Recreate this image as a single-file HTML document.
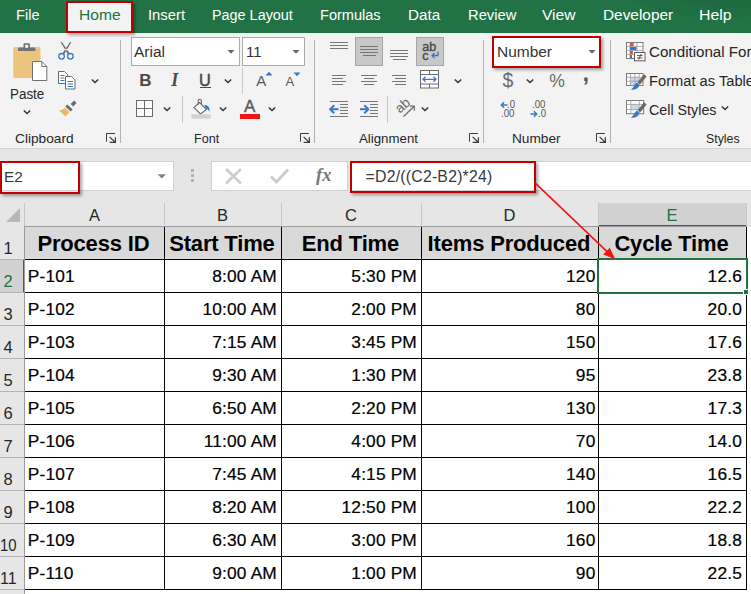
<!DOCTYPE html>
<html><head><meta charset="utf-8"><title>Excel</title>
<style>
*{box-sizing:border-box;margin:0;padding:0}
html,body{width:751px;height:594px;overflow:hidden;background:#e6e6e6;font-family:"Liberation Sans",sans-serif;}
#app{position:relative;width:751px;height:594px;overflow:hidden}
.t{position:absolute;white-space:pre;display:block}
.b{position:absolute;display:block}
#tabs{position:absolute;left:0;top:0;width:751px;height:33px;background:#217346}
#ribbon{position:absolute;left:0;top:33px;width:751px;height:115px;background:#f3f3f3}

</style></head><body><div id="app">
<div id="tabs">
<svg class="b" style="left:560px;top:0px" width="191" height="33" viewBox="0 0 191 33"><path d="M70 0 C95 10 130 22 191 16 V0 Z" fill="#1f6e43"/><path d="M120 0 C140 6 165 10 191 7 V0 Z" fill="#1e6a40"/></svg>
<div class="b" style="left:67px;top:2px;width:66px;height:31px;background:#f3f3f3;"></div>
<span class="t" style="left:16.00px;top:6px;font-size:15.4px;line-height:17px;color:#ffffff;transform:scaleX(0.9510);transform-origin:0 0;">File</span>
<span class="t" style="left:79.00px;top:6px;font-size:15.4px;line-height:17px;color:#217346;transform:scaleX(1.0127);transform-origin:0 0;">Home</span>
<span class="t" style="left:147.65px;top:6px;font-size:15.4px;line-height:17px;color:#ffffff;transform:scaleX(0.9633);transform-origin:0 0;">Insert</span>
<span class="t" style="left:211.75px;top:6px;font-size:15.4px;line-height:17px;color:#ffffff;transform:scaleX(0.9354);transform-origin:0 0;">Page Layout</span>
<span class="t" style="left:320.00px;top:6px;font-size:15.4px;line-height:17px;color:#ffffff;transform:scaleX(0.9442);transform-origin:0 0;">Formulas</span>
<span class="t" style="left:408.00px;top:6px;font-size:15.4px;line-height:17px;color:#ffffff;transform:scaleX(0.9899);transform-origin:0 0;">Data</span>
<span class="t" style="left:467.75px;top:6px;font-size:15.4px;line-height:17px;color:#ffffff;transform:scaleX(0.9566);transform-origin:0 0;">Review</span>
<span class="t" style="left:542.45px;top:6px;font-size:15.4px;line-height:17px;color:#ffffff;transform:scaleX(1.0120);transform-origin:0 0;">View</span>
<span class="t" style="left:602.80px;top:6px;font-size:15.4px;line-height:17px;color:#ffffff;transform:scaleX(1.0001);transform-origin:0 0;">Developer</span>
<span class="t" style="left:699.45px;top:6px;font-size:15.4px;line-height:17px;color:#ffffff;transform:scaleX(1.0324);transform-origin:0 0;">Help</span>
</div>
<div id="ribbon"></div>
<div class="b" style="left:0px;top:148px;width:751px;height:1px;background:#d4d4d4;"></div>
<svg class="b" style="left:10px;top:40px" width="40" height="44" viewBox="0 0 40 44"><rect x="3.2" y="7" width="27.2" height="31" rx="1.6" fill="#ebc57d"/><path d="M8 11 v-2.2 q0 -1.3 1.3 -1.3 h4.2 v-3 q0 -1.2 1.2 -1.2 h4 q1.2 0 1.2 1.2 v3 h4.2 q1.3 0 1.3 1.3 v2.2 z" fill="#727272"/><rect x="15.2" y="4.8" width="3" height="3" fill="#f3f3f3"/><path d="M22.5 21.5 h9.3 l5 5 v14 h-14.3 z" fill="#fff" stroke="#6e6e6e" stroke-width="1"/><path d="M31.8 21.5 v5 h5" fill="none" stroke="#6e6e6e" stroke-width="1"/></svg>
<span class="t" style="left:9.60px;top:85px;font-size:15.3px;line-height:17px;color:#262626;transform:scaleX(0.8767);transform-origin:0 0;">Paste</span>
<svg class="b" style="left:20.5px;top:107px" width="12" height="10" viewBox="0 0 12 10"><path d="M2.8 3.4 L6 6.6 L9.2 3.4" fill="none" stroke="#333" stroke-width="1.4"/></svg>
<svg class="b" style="left:56px;top:40px" width="20" height="23" viewBox="0 0 20 23"><path d="M4.6 2 L5.9 2 L13.6 13.6 L12 14.6 Z M15.4 2 L14.1 2 L6.4 13.6 L8 14.6 Z" fill="#6a6a6a"/><circle cx="5.6" cy="16.3" r="2.8" fill="none" stroke="#3b78c4" stroke-width="1.3"/><circle cx="14.4" cy="16.3" r="2.8" fill="none" stroke="#3b78c4" stroke-width="1.3"/></svg>
<svg class="b" style="left:56px;top:69px" width="22" height="22" viewBox="0 0 22 22"><path d="M2.5 2.5 h6 l3 3 v9 h-9 z" fill="#fff" stroke="#6a6a6a" stroke-width="1"/><path d="M9.5 7.5 h6 l3.5 3.5 v9 h-9.5 z" fill="#fff" stroke="#6a6a6a" stroke-width="1"/><path d="M4.5 6.5 h4 M4.5 9 h4 M4.5 11.5 h4 M11.5 12.5 h5.5 M11.5 15 h5.5 M11.5 17.5 h5.5" stroke="#3b78c4" stroke-width="1"/></svg>
<svg class="b" style="left:89px;top:75.6px" width="12" height="10" viewBox="0 0 12 10"><path d="M2.8 3.4 L6 6.6 L9.2 3.4" fill="none" stroke="#333" stroke-width="1.4"/></svg>
<svg class="b" style="left:56px;top:99px" width="22" height="20" viewBox="0 0 22 20"><path d="M14.6 5 L18.2 1.6 L20.6 4 L17.2 7.6 Z" fill="#6a6a6a"/><path d="M11.4 5.4 L16.6 10.6 L14.6 12.6 L9.4 7.4 Z" fill="#6a6a6a"/><path d="M9 8.5 L13.5 13 L9.5 17.5 L3 11.5 C6 11.5 8 10 9 8.5 Z" fill="#e9b765"/></svg>
<span class="t" style="left:14.60px;top:131px;font-size:13.5px;line-height:15px;color:#262626;transform:scaleX(1.0141);transform-origin:0 0;">Clipboard</span>
<svg class="b" style="left:106px;top:133px" width="11" height="11" viewBox="0 0 11 11"><path d="M0.5 8.7 V0.5 H9" fill="none" stroke="#3c3c3c" stroke-width="1"/><path d="M3.6 3.9 L9.2 9.2 M9.4 4.2 V9.4 H3.6" fill="none" stroke="#3c3c3c" stroke-width="1.2"/></svg>
<div class="b" style="left:120px;top:40px;width:1px;height:103px;background:#b3b3b3;"></div>
<div class="b" style="left:131px;top:37px;width:109px;height:29px;background:#fff;border:1px solid #ababab;"></div>
<span class="t" style="left:134.00px;top:43px;font-size:15.3px;line-height:17px;color:#333;transform:scaleX(1.0128);transform-origin:0 0;">Arial</span>
<svg class="b" style="left:226px;top:48.5px" width="10" height="6" viewBox="0 0 10 6"><path d="M1.5 1 L8.5 1 L5 4.8 Z" fill="#666"/></svg>
<div class="b" style="left:242px;top:37px;width:63px;height:29px;background:#fff;border:1px solid #ababab;"></div>
<span class="t" style="left:245.50px;top:43px;font-size:15.3px;line-height:17px;color:#333;transform:scaleX(0.9759);transform-origin:0 0;">11</span>
<svg class="b" style="left:291px;top:48.5px" width="10" height="6" viewBox="0 0 10 6"><path d="M1.5 1 L8.5 1 L5 4.8 Z" fill="#666"/></svg>
<span class="t" style="left:139.30px;top:71px;font-size:17px;line-height:19px;color:#4a4a4a;font-weight:bold;">B</span>
<span class="t" style="left:171.20px;top:70px;font-size:18px;line-height:20px;color:#4a4a4a;font-weight:bold;font-style:italic;font-family:'Liberation Serif',serif;">I</span>
<span class="t" style="left:199.00px;top:71px;font-size:16.3px;line-height:18px;color:#4a4a4a;-webkit-text-stroke:0.5px #4a4a4a;">U</span>
<div class="b" style="left:199.5px;top:87px;width:11.0px;height:1.2999999999999972px;background:#4a4a4a;"></div>
<svg class="b" style="left:221.6px;top:75.6px" width="12" height="10" viewBox="0 0 12 10"><path d="M2.8 3.4 L6 6.6 L9.2 3.4" fill="none" stroke="#333" stroke-width="1.4"/></svg>
<div class="b" style="left:242px;top:68px;width:1px;height:26px;background:#c8c8c8;"></div>
<span class="t" style="left:256.20px;top:72px;font-size:15px;line-height:17px;color:#5a5a5a;">A</span>
<svg class="b" style="left:265px;top:71px" width="8" height="5" viewBox="0 0 8 5"><path d="M0.5 4.5 L4 0.8 L7.5 4.5 Z" fill="#3b78c4"/></svg>
<span class="t" style="left:285.50px;top:74px;font-size:13px;line-height:15px;color:#5a5a5a;">A</span>
<svg class="b" style="left:293px;top:72px" width="8" height="5" viewBox="0 0 8 5"><path d="M0.5 0.5 L7.5 0.5 L4 4.2 Z" fill="#3b78c4"/></svg>
<svg class="b" style="left:135px;top:99px" width="20" height="20" viewBox="0 0 20 20"><rect x="1.5" y="1.5" width="16" height="16" fill="#fff" stroke="#6a6a6a" stroke-width="1"/><path d="M9.5 1.5 V17.5 M1.5 9.5 H17.5" stroke="#6a6a6a" stroke-width="1"/></svg>
<svg class="b" style="left:161.3px;top:104.2px" width="12" height="10" viewBox="0 0 12 10"><path d="M2.8 3.4 L6 6.6 L9.2 3.4" fill="none" stroke="#333" stroke-width="1.4"/></svg>
<div class="b" style="left:182px;top:96px;width:1px;height:27px;background:#c8c8c8;"></div>
<svg class="b" style="left:190px;top:97px" width="24" height="24" viewBox="0 0 24 24"><path d="M9.5 5.5 L16.5 12.5 L10.5 17 L4 10.5 Z" fill="#fff" stroke="#6a6a6a" stroke-width="1.1"/><path d="M8.2 8 V3.8 a1.6 1.6 0 0 1 3.2 0 V7" fill="none" stroke="#6a6a6a" stroke-width="1.1"/><path d="M14.5 8 C18 8 20 10 19.5 15 C18.5 12.5 17 11.5 15.5 11.5 Z" fill="#3b78c4"/><rect x="1.4" y="17.3" width="19.4" height="4.4" fill="#d2d2d2"/></svg>
<svg class="b" style="left:217.3px;top:104.2px" width="12" height="10" viewBox="0 0 12 10"><path d="M2.8 3.4 L6 6.6 L9.2 3.4" fill="none" stroke="#333" stroke-width="1.4"/></svg>
<span class="t" style="left:243.90px;top:97px;font-size:17px;line-height:19px;color:#5a5a5a;-webkit-text-stroke:0.4px #5a5a5a;">A</span>
<div class="b" style="left:240px;top:114px;width:20px;height:5px;background:#f01414;"></div>
<svg class="b" style="left:265.9px;top:104.2px" width="12" height="10" viewBox="0 0 12 10"><path d="M2.8 3.4 L6 6.6 L9.2 3.4" fill="none" stroke="#333" stroke-width="1.4"/></svg>
<span class="t" style="left:193.80px;top:131px;font-size:13.5px;line-height:15px;color:#262626;transform:scaleX(0.9329);transform-origin:0 0;">Font</span>
<svg class="b" style="left:300px;top:133px" width="11" height="11" viewBox="0 0 11 11"><path d="M0.5 8.7 V0.5 H9" fill="none" stroke="#3c3c3c" stroke-width="1"/><path d="M3.6 3.9 L9.2 9.2 M9.4 4.2 V9.4 H3.6" fill="none" stroke="#3c3c3c" stroke-width="1.2"/></svg>
<div class="b" style="left:314px;top:40px;width:1px;height:103px;background:#b3b3b3;"></div>
<div class="b" style="left:330px;top:42px;width:18px;height:1px;background:#777;"></div>
<div class="b" style="left:330px;top:45px;width:18px;height:1px;background:#777;"></div>
<div class="b" style="left:330px;top:48px;width:18px;height:1px;background:#777;"></div>
<div class="b" style="left:355px;top:37px;width:28px;height:29px;background:#c8c8c8;border:1px solid #a6a6a6;"></div>
<div class="b" style="left:360px;top:46px;width:18px;height:1px;background:#777;"></div>
<div class="b" style="left:360px;top:49px;width:18px;height:1px;background:#777;"></div>
<div class="b" style="left:360px;top:52px;width:18px;height:1px;background:#777;"></div>
<div class="b" style="left:362.5px;top:55px;width:13.0px;height:1px;background:#777;"></div>
<div class="b" style="left:390px;top:50px;width:18px;height:1px;background:#777;"></div>
<div class="b" style="left:390px;top:53px;width:18px;height:1px;background:#777;"></div>
<div class="b" style="left:390px;top:56px;width:18px;height:1px;background:#777;"></div>
<div class="b" style="left:392.5px;top:59px;width:13.0px;height:1px;background:#777;"></div>
<div class="b" style="left:416px;top:37px;width:28px;height:29px;background:#c8c8c8;border:1px solid #a6a6a6;"></div>
<span class="t" style="left:422.30px;top:40px;font-size:12.5px;line-height:14px;color:#4a4a4a;-webkit-text-stroke:0.4px #4a4a4a;">ab</span>
<span class="t" style="left:422.30px;top:49px;font-size:12.5px;line-height:14px;color:#4a4a4a;-webkit-text-stroke:0.4px #4a4a4a;">c</span>
<svg class="b" style="left:430px;top:51px" width="10" height="9" viewBox="0 0 10 9"><path d="M8 0.5 V4.5 H2 M4.5 2 L2 4.5 L4.5 7" fill="none" stroke="#3b78c4" stroke-width="1.3"/></svg>
<div class="b" style="left:331.8px;top:75px;width:14.199999999999989px;height:1px;background:#777;"></div>
<div class="b" style="left:361px;top:75px;width:16px;height:1px;background:#777;"></div>
<div class="b" style="left:391.8px;top:75px;width:14.199999999999989px;height:1px;background:#777;"></div>
<div class="b" style="left:331.8px;top:78px;width:11.599999999999966px;height:1px;background:#777;"></div>
<div class="b" style="left:363.6px;top:78px;width:10.799999999999955px;height:1px;background:#777;"></div>
<div class="b" style="left:394.6px;top:78px;width:11.399999999999977px;height:1px;background:#777;"></div>
<div class="b" style="left:331.8px;top:81px;width:14.199999999999989px;height:1px;background:#777;"></div>
<div class="b" style="left:361px;top:81px;width:16px;height:1px;background:#777;"></div>
<div class="b" style="left:391.8px;top:81px;width:14.199999999999989px;height:1px;background:#777;"></div>
<div class="b" style="left:331.8px;top:84px;width:11.599999999999966px;height:1px;background:#777;"></div>
<div class="b" style="left:363.6px;top:84px;width:10.799999999999955px;height:1px;background:#777;"></div>
<div class="b" style="left:394.6px;top:84px;width:11.399999999999977px;height:1px;background:#777;"></div>
<svg class="b" style="left:420px;top:70px" width="20" height="19" viewBox="0 0 20 19"><rect x="0.5" y="0.5" width="18" height="17.5" fill="#fff" stroke="#6a6a6a" stroke-width="1"/><path d="M0.5 4.5 H18.5 M0.5 14 H18.5 M9.5 0.5 V4.5 M9.5 14 V18" stroke="#6a6a6a" stroke-width="1"/><path d="M3 9.3 H16 M5.5 6.8 L3 9.3 L5.5 11.8 M13.5 6.8 L16 9.3 L13.5 11.8" fill="none" stroke="#3b78c4" stroke-width="1.3"/></svg>
<svg class="b" style="left:452.2px;top:75.6px" width="12" height="10" viewBox="0 0 12 10"><path d="M2.8 3.4 L6 6.6 L9.2 3.4" fill="none" stroke="#333" stroke-width="1.4"/></svg>
<div class="b" style="left:330px;top:101px;width:18px;height:1px;background:#777;"></div>
<div class="b" style="left:330px;top:116px;width:18px;height:1px;background:#777;"></div>
<div class="b" style="left:340px;top:104px;width:8px;height:1px;background:#777;"></div>
<div class="b" style="left:340px;top:107px;width:8px;height:1px;background:#777;"></div>
<div class="b" style="left:340px;top:110px;width:8px;height:1px;background:#777;"></div>
<div class="b" style="left:340px;top:113px;width:8px;height:1px;background:#777;"></div>
<div class="b" style="left:360px;top:101px;width:18px;height:1px;background:#777;"></div>
<div class="b" style="left:360px;top:116px;width:18px;height:1px;background:#777;"></div>
<div class="b" style="left:370px;top:104px;width:8px;height:1px;background:#777;"></div>
<div class="b" style="left:370px;top:107px;width:8px;height:1px;background:#777;"></div>
<div class="b" style="left:370px;top:110px;width:8px;height:1px;background:#777;"></div>
<div class="b" style="left:370px;top:113px;width:8px;height:1px;background:#777;"></div>
<svg class="b" style="left:329px;top:104px" width="11" height="11" viewBox="0 0 11 11"><path d="M9.5 5.2 H2.5" stroke="#3b78c4" stroke-width="2" fill="none"/><path d="M5.2 1.2 L1.2 5.2 L5.2 9.2" fill="none" stroke="#3b78c4" stroke-width="2"/></svg>
<svg class="b" style="left:359px;top:104px" width="11" height="11" viewBox="0 0 11 11"><path d="M1 5.2 H8" stroke="#3b78c4" stroke-width="2" fill="none"/><path d="M5.3 1.2 L9.3 5.2 L5.3 9.2" fill="none" stroke="#3b78c4" stroke-width="2"/></svg>
<div class="b" style="left:387px;top:96px;width:1px;height:27px;background:#c8c8c8;"></div>
<span class="t" style="left:395px;top:98px;font-size:13.5px;line-height:15px;color:#666;transform:rotate(-42deg);transform-origin:50% 50%;">ab</span>
<svg class="b" style="left:398px;top:102px" width="19" height="17" viewBox="0 0 19 17"><path d="M5.5 14.5 L16 4.5 M11.8 4.2 H16.3 V8.7" fill="none" stroke="#6a6a6a" stroke-width="1.2"/></svg>
<svg class="b" style="left:419.3px;top:104.2px" width="12" height="10" viewBox="0 0 12 10"><path d="M2.8 3.4 L6 6.6 L9.2 3.4" fill="none" stroke="#333" stroke-width="1.4"/></svg>
<span class="t" style="left:358.60px;top:131px;font-size:13.5px;line-height:15px;color:#262626;transform:scaleX(0.9828);transform-origin:0 0;">Alignment</span>
<svg class="b" style="left:469px;top:133px" width="11" height="11" viewBox="0 0 11 11"><path d="M0.5 8.7 V0.5 H9" fill="none" stroke="#3c3c3c" stroke-width="1"/><path d="M3.6 3.9 L9.2 9.2 M9.4 4.2 V9.4 H3.6" fill="none" stroke="#3c3c3c" stroke-width="1.2"/></svg>
<div class="b" style="left:483px;top:40px;width:1px;height:103px;background:#b3b3b3;"></div>
<div class="b" style="left:493px;top:38px;width:107px;height:29px;background:#fff;"></div>
<span class="t" style="left:496.60px;top:43px;font-size:15.3px;line-height:17px;color:#333;transform:scaleX(1.0107);transform-origin:0 0;">Number</span>
<svg class="b" style="left:586.9px;top:48.5px" width="10" height="6" viewBox="0 0 10 6"><path d="M1.5 1 L8.5 1 L5 4.8 Z" fill="#666"/></svg>
<span class="t" style="left:502.50px;top:69px;font-size:19.5px;line-height:22px;color:#6a6a6a;">$</span>
<svg class="b" style="left:524.1px;top:75.6px" width="12" height="10" viewBox="0 0 12 10"><path d="M2.8 3.4 L6 6.6 L9.2 3.4" fill="none" stroke="#333" stroke-width="1.4"/></svg>
<span class="t" style="left:549.30px;top:71px;font-size:17.5px;line-height:20px;color:#6a6a6a;">%</span>
<span class="t" style="left:582.50px;top:59px;font-size:24px;line-height:27px;color:#5a5a5a;font-weight:bold;">,</span>
<span class="t" style="left:507.30px;top:98px;font-size:11px;line-height:12px;color:#5a5a5a;transform:scaleX(0.8720);transform-origin:0 0;">.0</span>
<span class="t" style="left:501.30px;top:107px;font-size:11px;line-height:12px;color:#5a5a5a;transform:scaleX(0.8828);transform-origin:0 0;">.00</span>
<svg class="b" style="left:500px;top:101px" width="8" height="8" viewBox="0 0 8 8"><path d="M7.5 4 H1.5 M4 1.2 L1.3 4 L4 6.8" fill="none" stroke="#3b78c4" stroke-width="1.5"/></svg>
<span class="t" style="left:532.30px;top:98px;font-size:11px;line-height:12px;color:#5a5a5a;transform:scaleX(0.8828);transform-origin:0 0;">.00</span>
<span class="t" style="left:538.20px;top:107px;font-size:11px;line-height:12px;color:#5a5a5a;transform:scaleX(0.8720);transform-origin:0 0;">.0</span>
<svg class="b" style="left:530px;top:110px" width="8" height="8" viewBox="0 0 8 8"><path d="M0.5 4 H6.5 M4 1.2 L6.7 4 L4 6.8" fill="none" stroke="#3b78c4" stroke-width="1.5"/></svg>
<span class="t" style="left:511.50px;top:131px;font-size:13.5px;line-height:15px;color:#262626;transform:scaleX(1.0122);transform-origin:0 0;">Number</span>
<svg class="b" style="left:596px;top:133px" width="11" height="11" viewBox="0 0 11 11"><path d="M0.5 8.7 V0.5 H9" fill="none" stroke="#3c3c3c" stroke-width="1"/><path d="M3.6 3.9 L9.2 9.2 M9.4 4.2 V9.4 H3.6" fill="none" stroke="#3c3c3c" stroke-width="1.2"/></svg>
<div class="b" style="left:610px;top:40px;width:1px;height:103px;background:#b3b3b3;"></div>
<svg class="b" style="left:626px;top:42px" width="21" height="20" viewBox="0 0 21 20"><rect x="0.5" y="0.5" width="16.5" height="16" fill="#fff" stroke="#7a7a7a" stroke-width="1"/><path d="M0.5 4.5 H17 M0.5 8.5 H17 M0.5 12.5 H17 M4 0.5 V16.5 M11 0.5 V16.5" stroke="#a0a0a0" stroke-width="0.8"/><rect x="4" y="1" width="3.6" height="3.2" fill="#d9532c"/><rect x="4" y="5" width="6.4" height="3.2" fill="#3b78c4"/><rect x="4" y="9" width="2.8" height="3.2" fill="#d9532c"/><rect x="4" y="13" width="2" height="3" fill="#3b78c4"/><rect x="8.5" y="10.5" width="10.5" height="8.3" fill="#fff" stroke="#5a5a5a" stroke-width="1"/><path d="M11 13.6 H16.6 M11 16 H16.6 M15.2 12 L12.6 17.6" stroke="#444" stroke-width="0.9"/></svg>
<span class="t" style="left:648.80px;top:43px;font-size:15.3px;line-height:17px;color:#262626;transform:scaleX(0.9879);transform-origin:0 0;">Conditional For</span>
<svg class="b" style="left:626px;top:73px" width="22" height="19" viewBox="0 0 22 19"><rect x="0.5" y="0.5" width="16.5" height="12" fill="#fff" stroke="#7a7a7a" stroke-width="1"/><rect x="4.4" y="4.2" width="8.8" height="8" fill="#c5d9f1"/><path d="M0.5 4.2 H17 M0.5 8.2 H17 M4.4 0.5 V12.5 M8.8 0.5 V12.5 M13.2 0.5 V12.5" stroke="#9a9a9a" stroke-width="0.8"/><path d="M18.2 1.2 L20.6 3.6 L14.2 11.4 L11.6 9 Z" fill="#6a6a6a"/><path d="M11 9.6 L13.6 12 C12.6 15.6 9 17.2 4.6 16.6 C7.6 15.4 8.2 11.6 11 9.6 Z" fill="#3b78c4"/></svg>
<span class="t" style="left:648.80px;top:72px;font-size:15.3px;line-height:17px;color:#262626;transform:scaleX(0.9596);transform-origin:0 0;">Format as Table</span>
<svg class="b" style="left:626px;top:100px" width="22" height="20" viewBox="0 0 22 20"><rect x="0.5" y="0.5" width="17.2" height="13.2" fill="#fff" stroke="#7a7a7a" stroke-width="1"/><rect x="4.8" y="4.4" width="8.4" height="5.2" fill="#c5d9f1"/><path d="M0.5 4.4 H17.7 M0.5 9.6 H17.7 M4.8 0.5 V13.7 M13.2 0.5 V13.7" stroke="#9a9a9a" stroke-width="0.8"/><path d="M18.2 2.2 L20.6 4.6 L14.2 12.4 L11.6 10 Z" fill="#6a6a6a"/><path d="M11 10.6 L13.6 13 C12.6 16.6 9 18.2 4.6 17.6 C7.6 16.4 8.2 12.6 11 10.6 Z" fill="#3b78c4"/></svg>
<span class="t" style="left:648.80px;top:101px;font-size:15.3px;line-height:17px;color:#262626;transform:scaleX(0.9340);transform-origin:0 0;">Cell Styles</span>
<svg class="b" style="left:718.5px;top:103.4px" width="12" height="10" viewBox="0 0 12 10"><path d="M2.8 3.4 L6 6.6 L9.2 3.4" fill="none" stroke="#333" stroke-width="1.4"/></svg>
<span class="t" style="left:705.60px;top:131px;font-size:13.5px;line-height:15px;color:#262626;transform:scaleX(0.9140);transform-origin:0 0;">Styles</span>
<div class="b" style="left:-1px;top:161px;width:175px;height:30px;background:#fff;border:1px solid #d0d0d0;"></div>
<span class="t" style="left:3.90px;top:168px;font-size:15.4px;line-height:17px;color:#3a3a3a;">E2</span>
<svg class="b" style="left:156px;top:173px" width="12" height="8" viewBox="0 0 12 8"><path d="M1.5 1.2 L10 1.2 L5.75 5.6 Z" fill="#858585"/></svg>
<div class="b" style="left:191px;top:169px;width:3px;height:3px;background:#b2b2b2;"></div>
<div class="b" style="left:191px;top:174px;width:3px;height:3px;background:#b2b2b2;"></div>
<div class="b" style="left:191px;top:179px;width:3px;height:3px;background:#b2b2b2;"></div>
<div class="b" style="left:211px;top:161px;width:137px;height:30px;background:#fff;border:1px solid #d0d0d0;"></div>
<svg class="b" style="left:224px;top:167px" width="19" height="18" viewBox="0 0 19 18"><path d="M2 2 L17 16.5 M17 2 L2 16.5" stroke="#cdcdcd" stroke-width="2.6" fill="none"/></svg>
<svg class="b" style="left:269px;top:167px" width="21" height="18" viewBox="0 0 21 18"><path d="M2 9.5 L7.5 15 L19 2.5" stroke="#cdcdcd" stroke-width="2.9" fill="none"/></svg>
<span class="t" style="left:315.50px;top:164px;font-size:19.5px;line-height:21px;color:#787878;transform:scaleX(0.9542);transform-origin:0 0;font-weight:bold;font-style:italic;font-family:'Liberation Serif',serif;">fx</span>
<div class="b" style="left:350px;top:161px;width:402px;height:30px;background:#fff;border:1px solid #d0d0d0;"></div>
<span class="t" style="left:365.60px;top:168px;font-size:15.8px;line-height:17px;color:#3a3a3a;letter-spacing:0.222px;">=D2/((C2-B2)*24)</span>
<div id="grid">
<div class="b" style="left:0px;top:203px;width:751px;height:391px;background:#ffffff;"></div>
<div class="b" style="left:0px;top:203px;width:751px;height:24px;background:#e6e6e6;"></div>
<div class="b" style="left:0px;top:227px;width:24px;height:367px;background:#e6e6e6;"></div>
<div class="b" style="left:598px;top:203px;width:148px;height:24px;background:#d2d2d2;"></div>
<div class="b" style="left:598px;top:225px;width:149px;height:2px;background:#217346;"></div>
<div class="b" style="left:0px;top:260px;width:24px;height:33px;background:#d2d2d2;"></div>
<div class="b" style="left:23px;top:260px;width:2px;height:33px;background:#217346;"></div>
<div class="b" style="left:24px;top:227px;width:722px;height:33px;background:#d9d9d9;"></div>
<svg class="b" style="left:4px;top:206px" width="18" height="18" viewBox="0 0 18 18"><path d="M16 2 V16 H2 Z" fill="#b7b7b7"/></svg>
<div class="b" style="left:24px;top:203px;width:1px;height:24px;background:#c6c6c6;"></div>
<div class="b" style="left:164px;top:203px;width:1px;height:24px;background:#c6c6c6;"></div>
<div class="b" style="left:281px;top:203px;width:1px;height:24px;background:#c6c6c6;"></div>
<div class="b" style="left:421px;top:203px;width:1px;height:24px;background:#c6c6c6;"></div>
<div class="b" style="left:598px;top:203px;width:1px;height:24px;background:#c6c6c6;"></div>
<div class="b" style="left:746px;top:203px;width:1px;height:24px;background:#c6c6c6;"></div>
<div class="b" style="left:0px;top:259px;width:24px;height:1px;background:#b4b4b4;"></div>
<div class="b" style="left:0px;top:292px;width:24px;height:1px;background:#b4b4b4;"></div>
<div class="b" style="left:0px;top:325px;width:24px;height:1px;background:#b4b4b4;"></div>
<div class="b" style="left:0px;top:358px;width:24px;height:1px;background:#b4b4b4;"></div>
<div class="b" style="left:0px;top:391px;width:24px;height:1px;background:#b4b4b4;"></div>
<div class="b" style="left:0px;top:424px;width:24px;height:1px;background:#b4b4b4;"></div>
<div class="b" style="left:0px;top:457px;width:24px;height:1px;background:#b4b4b4;"></div>
<div class="b" style="left:0px;top:490px;width:24px;height:1px;background:#b4b4b4;"></div>
<div class="b" style="left:0px;top:523px;width:24px;height:1px;background:#b4b4b4;"></div>
<div class="b" style="left:0px;top:556px;width:24px;height:1px;background:#b4b4b4;"></div>
<div class="b" style="left:0px;top:589px;width:24px;height:1px;background:#b4b4b4;"></div>
<span class="t" style="left:89.00px;top:206px;font-size:16.5px;line-height:18px;color:#262626;">A</span>
<span class="t" style="left:217.00px;top:206px;font-size:16.5px;line-height:18px;color:#262626;">B</span>
<span class="t" style="left:345.04px;top:206px;font-size:16.5px;line-height:18px;color:#262626;">C</span>
<span class="t" style="left:503.54px;top:206px;font-size:16.5px;line-height:18px;color:#262626;">D</span>
<span class="t" style="left:666.50px;top:206px;font-size:16.5px;line-height:18px;color:#217346;">E</span>
<span class="t" style="left:3.41px;top:239px;font-size:16.5px;line-height:18px;color:#262626;">1</span>
<span class="t" style="left:3.41px;top:272px;font-size:16.5px;line-height:18px;color:#217346;">2</span>
<span class="t" style="left:3.41px;top:305px;font-size:16.5px;line-height:18px;color:#262626;">3</span>
<span class="t" style="left:3.41px;top:338px;font-size:16.5px;line-height:18px;color:#262626;">4</span>
<span class="t" style="left:3.41px;top:371px;font-size:16.5px;line-height:18px;color:#262626;">5</span>
<span class="t" style="left:3.41px;top:404px;font-size:16.5px;line-height:18px;color:#262626;">6</span>
<span class="t" style="left:3.41px;top:437px;font-size:16.5px;line-height:18px;color:#262626;">7</span>
<span class="t" style="left:3.41px;top:470px;font-size:16.5px;line-height:18px;color:#262626;">8</span>
<span class="t" style="left:3.41px;top:503px;font-size:16.5px;line-height:18px;color:#262626;">9</span>
<span class="t" style="left:-0.30px;top:536px;font-size:16.5px;line-height:18px;color:#262626;transform:scaleX(0.9045);transform-origin:0 0;">10</span>
<span class="t" style="left:-0.30px;top:569px;font-size:16.5px;line-height:18px;color:#262626;transform:scaleX(0.9691);transform-origin:0 0;">11</span>
<div class="b" style="left:24px;top:227px;width:1px;height:367px;background:#9b9b9b;"></div>
<div class="b" style="left:164px;top:227px;width:1px;height:363px;background:#000;"></div>
<div class="b" style="left:281px;top:227px;width:1px;height:363px;background:#000;"></div>
<div class="b" style="left:421px;top:227px;width:1px;height:363px;background:#000;"></div>
<div class="b" style="left:598px;top:227px;width:1px;height:363px;background:#000;"></div>
<div class="b" style="left:746px;top:227px;width:1px;height:363px;background:#000;"></div>
<div class="b" style="left:24px;top:226px;width:723px;height:1px;background:#9b9b9b;"></div>
<div class="b" style="left:25px;top:259px;width:722px;height:1px;background:#000;"></div>
<div class="b" style="left:25px;top:292px;width:722px;height:1px;background:#000;"></div>
<div class="b" style="left:25px;top:325px;width:722px;height:1px;background:#000;"></div>
<div class="b" style="left:25px;top:358px;width:722px;height:1px;background:#000;"></div>
<div class="b" style="left:25px;top:391px;width:722px;height:1px;background:#000;"></div>
<div class="b" style="left:25px;top:424px;width:722px;height:1px;background:#000;"></div>
<div class="b" style="left:25px;top:457px;width:722px;height:1px;background:#000;"></div>
<div class="b" style="left:25px;top:490px;width:722px;height:1px;background:#000;"></div>
<div class="b" style="left:25px;top:523px;width:722px;height:1px;background:#000;"></div>
<div class="b" style="left:25px;top:556px;width:722px;height:1px;background:#000;"></div>
<div class="b" style="left:25px;top:589px;width:722px;height:1px;background:#000;"></div>
<span class="t" style="left:37.40px;top:231px;font-size:22px;line-height:25px;color:#000;letter-spacing:-0.170px;font-weight:bold;">Process ID</span>
<span class="t" style="left:169.17px;top:231px;font-size:22px;line-height:25px;color:#000;letter-spacing:-0.170px;font-weight:bold;">Start Time</span>
<span class="t" style="left:301.79px;top:231px;font-size:22px;line-height:25px;color:#000;letter-spacing:-0.170px;font-weight:bold;">End Time</span>
<span class="t" style="left:427.58px;top:231px;font-size:22px;line-height:25px;color:#000;letter-spacing:-0.170px;font-weight:bold;">Items Produced</span>
<span class="t" style="left:614.38px;top:231px;font-size:22px;line-height:25px;color:#000;letter-spacing:-0.170px;font-weight:bold;">Cycle Time</span>
<span class="t" style="left:27.80px;top:266px;font-size:17.33px;line-height:20px;color:#000;letter-spacing:0.150px;-webkit-text-stroke:0.2px #000;">P-101</span>
<span class="t" style="left:212.32px;top:266px;font-size:17.33px;line-height:20px;color:#000;letter-spacing:0.150px;-webkit-text-stroke:0.2px #000;">8:00 AM</span>
<span class="t" style="left:351.36px;top:266px;font-size:17.33px;line-height:20px;color:#000;letter-spacing:0.150px;-webkit-text-stroke:0.2px #000;">5:30 PM</span>
<span class="t" style="left:566.09px;top:266px;font-size:17.33px;line-height:20px;color:#000;letter-spacing:0.150px;-webkit-text-stroke:0.2px #000;">120</span>
<span class="t" style="left:707.62px;top:266px;font-size:17.33px;line-height:20px;color:#000;letter-spacing:0.150px;-webkit-text-stroke:0.2px #000;">12.6</span>
<span class="t" style="left:27.80px;top:299px;font-size:17.33px;line-height:20px;color:#000;letter-spacing:0.150px;-webkit-text-stroke:0.2px #000;">P-102</span>
<span class="t" style="left:202.53px;top:299px;font-size:17.33px;line-height:20px;color:#000;letter-spacing:0.150px;-webkit-text-stroke:0.2px #000;">10:00 AM</span>
<span class="t" style="left:351.36px;top:299px;font-size:17.33px;line-height:20px;color:#000;letter-spacing:0.150px;-webkit-text-stroke:0.2px #000;">2:00 PM</span>
<span class="t" style="left:575.87px;top:299px;font-size:17.33px;line-height:20px;color:#000;letter-spacing:0.150px;-webkit-text-stroke:0.2px #000;">80</span>
<span class="t" style="left:707.62px;top:299px;font-size:17.33px;line-height:20px;color:#000;letter-spacing:0.150px;-webkit-text-stroke:0.2px #000;">20.0</span>
<span class="t" style="left:27.80px;top:332px;font-size:17.33px;line-height:20px;color:#000;letter-spacing:0.150px;-webkit-text-stroke:0.2px #000;">P-103</span>
<span class="t" style="left:212.32px;top:332px;font-size:17.33px;line-height:20px;color:#000;letter-spacing:0.150px;-webkit-text-stroke:0.2px #000;">7:15 AM</span>
<span class="t" style="left:351.36px;top:332px;font-size:17.33px;line-height:20px;color:#000;letter-spacing:0.150px;-webkit-text-stroke:0.2px #000;">3:45 PM</span>
<span class="t" style="left:566.09px;top:332px;font-size:17.33px;line-height:20px;color:#000;letter-spacing:0.150px;-webkit-text-stroke:0.2px #000;">150</span>
<span class="t" style="left:707.62px;top:332px;font-size:17.33px;line-height:20px;color:#000;letter-spacing:0.150px;-webkit-text-stroke:0.2px #000;">17.6</span>
<span class="t" style="left:27.80px;top:365px;font-size:17.33px;line-height:20px;color:#000;letter-spacing:0.150px;-webkit-text-stroke:0.2px #000;">P-104</span>
<span class="t" style="left:212.32px;top:365px;font-size:17.33px;line-height:20px;color:#000;letter-spacing:0.150px;-webkit-text-stroke:0.2px #000;">9:30 AM</span>
<span class="t" style="left:351.36px;top:365px;font-size:17.33px;line-height:20px;color:#000;letter-spacing:0.150px;-webkit-text-stroke:0.2px #000;">1:30 PM</span>
<span class="t" style="left:575.87px;top:365px;font-size:17.33px;line-height:20px;color:#000;letter-spacing:0.150px;-webkit-text-stroke:0.2px #000;">95</span>
<span class="t" style="left:707.62px;top:365px;font-size:17.33px;line-height:20px;color:#000;letter-spacing:0.150px;-webkit-text-stroke:0.2px #000;">23.8</span>
<span class="t" style="left:27.80px;top:398px;font-size:17.33px;line-height:20px;color:#000;letter-spacing:0.150px;-webkit-text-stroke:0.2px #000;">P-105</span>
<span class="t" style="left:212.32px;top:398px;font-size:17.33px;line-height:20px;color:#000;letter-spacing:0.150px;-webkit-text-stroke:0.2px #000;">6:50 AM</span>
<span class="t" style="left:351.36px;top:398px;font-size:17.33px;line-height:20px;color:#000;letter-spacing:0.150px;-webkit-text-stroke:0.2px #000;">2:20 PM</span>
<span class="t" style="left:566.09px;top:398px;font-size:17.33px;line-height:20px;color:#000;letter-spacing:0.150px;-webkit-text-stroke:0.2px #000;">130</span>
<span class="t" style="left:707.62px;top:398px;font-size:17.33px;line-height:20px;color:#000;letter-spacing:0.150px;-webkit-text-stroke:0.2px #000;">17.3</span>
<span class="t" style="left:27.80px;top:431px;font-size:17.33px;line-height:20px;color:#000;letter-spacing:0.150px;-webkit-text-stroke:0.2px #000;">P-106</span>
<span class="t" style="left:203.81px;top:431px;font-size:17.33px;line-height:20px;color:#000;letter-spacing:0.150px;-webkit-text-stroke:0.2px #000;">11:00 AM</span>
<span class="t" style="left:351.36px;top:431px;font-size:17.33px;line-height:20px;color:#000;letter-spacing:0.150px;-webkit-text-stroke:0.2px #000;">4:00 PM</span>
<span class="t" style="left:575.87px;top:431px;font-size:17.33px;line-height:20px;color:#000;letter-spacing:0.150px;-webkit-text-stroke:0.2px #000;">70</span>
<span class="t" style="left:707.62px;top:431px;font-size:17.33px;line-height:20px;color:#000;letter-spacing:0.150px;-webkit-text-stroke:0.2px #000;">14.0</span>
<span class="t" style="left:27.80px;top:464px;font-size:17.33px;line-height:20px;color:#000;letter-spacing:0.150px;-webkit-text-stroke:0.2px #000;">P-107</span>
<span class="t" style="left:212.32px;top:464px;font-size:17.33px;line-height:20px;color:#000;letter-spacing:0.150px;-webkit-text-stroke:0.2px #000;">7:45 AM</span>
<span class="t" style="left:351.36px;top:464px;font-size:17.33px;line-height:20px;color:#000;letter-spacing:0.150px;-webkit-text-stroke:0.2px #000;">4:15 PM</span>
<span class="t" style="left:566.09px;top:464px;font-size:17.33px;line-height:20px;color:#000;letter-spacing:0.150px;-webkit-text-stroke:0.2px #000;">140</span>
<span class="t" style="left:707.62px;top:464px;font-size:17.33px;line-height:20px;color:#000;letter-spacing:0.150px;-webkit-text-stroke:0.2px #000;">16.5</span>
<span class="t" style="left:27.80px;top:497px;font-size:17.33px;line-height:20px;color:#000;letter-spacing:0.150px;-webkit-text-stroke:0.2px #000;">P-108</span>
<span class="t" style="left:212.32px;top:497px;font-size:17.33px;line-height:20px;color:#000;letter-spacing:0.150px;-webkit-text-stroke:0.2px #000;">8:20 AM</span>
<span class="t" style="left:341.57px;top:497px;font-size:17.33px;line-height:20px;color:#000;letter-spacing:0.150px;-webkit-text-stroke:0.2px #000;">12:50 PM</span>
<span class="t" style="left:566.09px;top:497px;font-size:17.33px;line-height:20px;color:#000;letter-spacing:0.150px;-webkit-text-stroke:0.2px #000;">100</span>
<span class="t" style="left:707.62px;top:497px;font-size:17.33px;line-height:20px;color:#000;letter-spacing:0.150px;-webkit-text-stroke:0.2px #000;">22.2</span>
<span class="t" style="left:27.80px;top:530px;font-size:17.33px;line-height:20px;color:#000;letter-spacing:0.150px;-webkit-text-stroke:0.2px #000;">P-109</span>
<span class="t" style="left:212.32px;top:530px;font-size:17.33px;line-height:20px;color:#000;letter-spacing:0.150px;-webkit-text-stroke:0.2px #000;">6:30 AM</span>
<span class="t" style="left:351.36px;top:530px;font-size:17.33px;line-height:20px;color:#000;letter-spacing:0.150px;-webkit-text-stroke:0.2px #000;">3:00 PM</span>
<span class="t" style="left:566.09px;top:530px;font-size:17.33px;line-height:20px;color:#000;letter-spacing:0.150px;-webkit-text-stroke:0.2px #000;">160</span>
<span class="t" style="left:707.62px;top:530px;font-size:17.33px;line-height:20px;color:#000;letter-spacing:0.150px;-webkit-text-stroke:0.2px #000;">18.8</span>
<span class="t" style="left:27.80px;top:563px;font-size:17.33px;line-height:20px;color:#000;letter-spacing:0.150px;-webkit-text-stroke:0.2px #000;">P-110</span>
<span class="t" style="left:212.32px;top:563px;font-size:17.33px;line-height:20px;color:#000;letter-spacing:0.150px;-webkit-text-stroke:0.2px #000;">9:00 AM</span>
<span class="t" style="left:351.36px;top:563px;font-size:17.33px;line-height:20px;color:#000;letter-spacing:0.150px;-webkit-text-stroke:0.2px #000;">1:00 PM</span>
<span class="t" style="left:575.87px;top:563px;font-size:17.33px;line-height:20px;color:#000;letter-spacing:0.150px;-webkit-text-stroke:0.2px #000;">90</span>
<span class="t" style="left:707.62px;top:563px;font-size:17.33px;line-height:20px;color:#000;letter-spacing:0.150px;-webkit-text-stroke:0.2px #000;">22.5</span>
<div class="b" style="left:597px;top:258px;width:151px;height:36px;border:2px solid #217346;background:transparent;"></div>
<div class="b" style="left:743px;top:289px;width:6px;height:6px;background:#217346;border:1px solid #fff;"></div>
</div>
<div class="b" style="left:66px;top:1px;width:67px;height:32px;border:2px solid #c00000;box-shadow:2px 2px 3px rgba(0,0,0,0.35);"></div>
<div class="b" style="left:492px;top:36px;width:109px;height:32px;border:2px solid #c00000;box-shadow:2px 2px 3px rgba(0,0,0,0.35);"></div>
<div class="b" style="left:0px;top:161px;width:80px;height:33px;border:2px solid #c00000;box-shadow:2px 2px 3px rgba(0,0,0,0.35);"></div>
<div class="b" style="left:350px;top:161px;width:186px;height:32px;border:2px solid #c00000;box-shadow:2px 2px 3px rgba(0,0,0,0.35);"></div>
<svg class="b" style="left:530px;top:178px" width="95" height="90" viewBox="0 0 95 90"><path d="M5.3 5.1 L80.5 76.8" stroke="#f01414" stroke-width="1.6" fill="none"/><path d="M85.2 81.3 L73.2 76.6 L79.8 69.7 Z" fill="#f01414"/></svg>
</div></body></html>
